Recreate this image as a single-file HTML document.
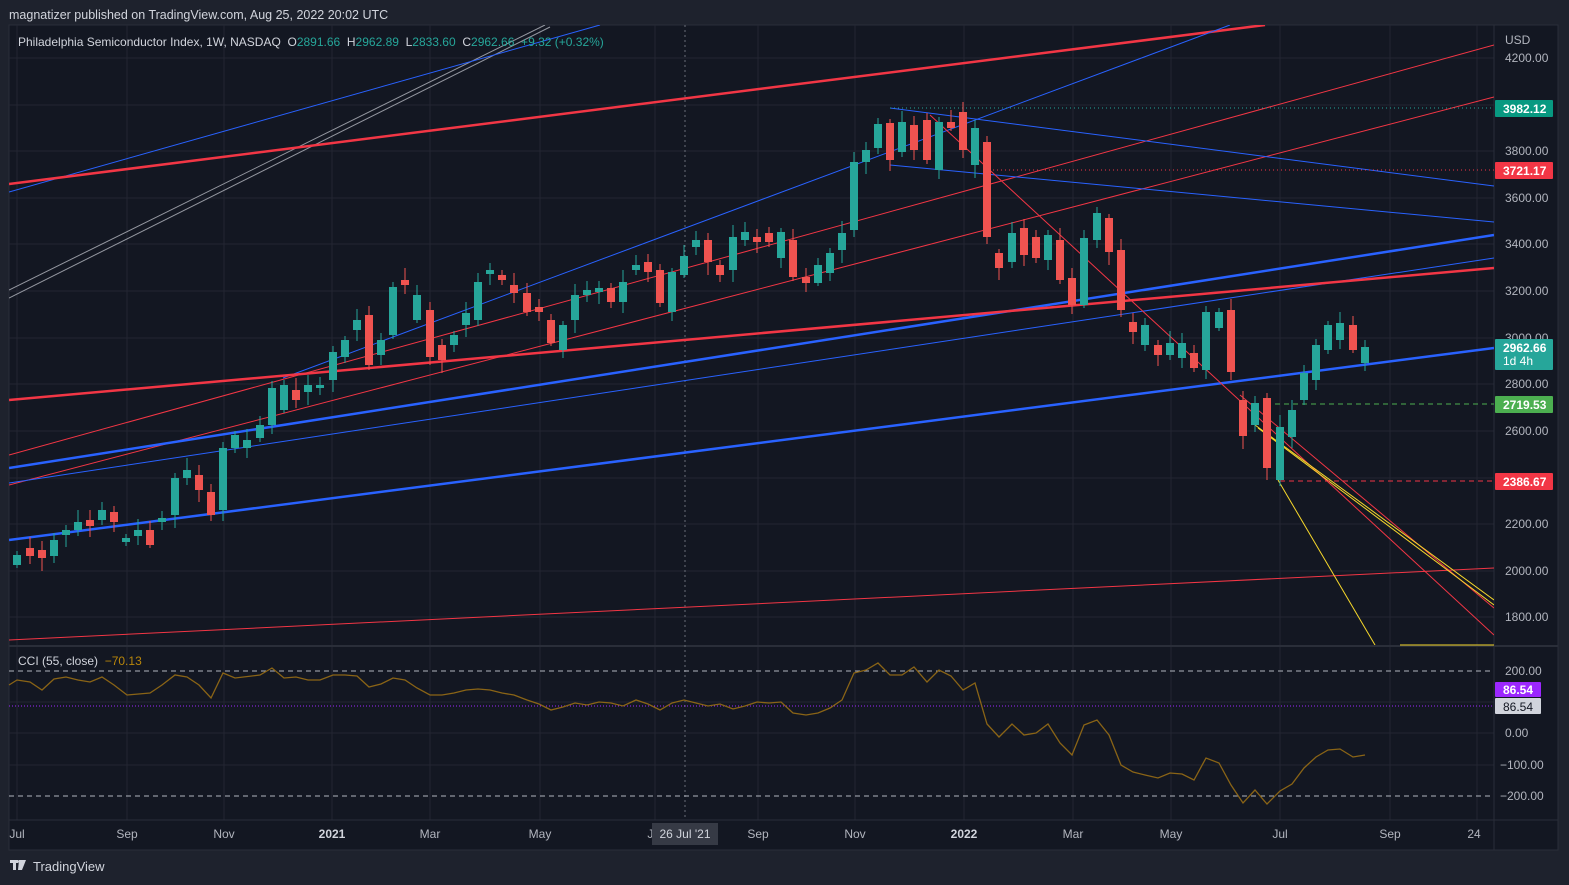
<!DOCTYPE html>
<html><head><meta charset="utf-8"><style>
body{margin:0;background:#1e222d;width:1569px;height:885px;overflow:hidden;font-family:"Liberation Sans",sans-serif;}
svg{position:absolute;left:0;top:0}
text{font-family:"Liberation Sans",sans-serif}
</style></head><body>
<svg width="1569" height="885" id="s">
<rect x="0" y="0" width="1569" height="885" fill="#1e222d"/>
<text x="9" y="19" fill="#d1d4dc" font-size="12.5">magnatizer published on TradingView.com, Aug 25, 2022 20:02 UTC</text>
<rect x="9" y="25" width="1549" height="825" fill="#131722" stroke="#2a2e39"/>
<g stroke="#232632" stroke-width="1">
<line x1="17" y1="25" x2="17" y2="820"/><line x1="127" y1="25" x2="127" y2="820"/><line x1="224" y1="25" x2="224" y2="820"/><line x1="332" y1="25" x2="332" y2="820"/><line x1="430" y1="25" x2="430" y2="820"/><line x1="540" y1="25" x2="540" y2="820"/><line x1="655" y1="25" x2="655" y2="820"/><line x1="758" y1="25" x2="758" y2="820"/><line x1="855" y1="25" x2="855" y2="820"/><line x1="964" y1="25" x2="964" y2="820"/><line x1="1073" y1="25" x2="1073" y2="820"/><line x1="1171" y1="25" x2="1171" y2="820"/><line x1="1280" y1="25" x2="1280" y2="820"/><line x1="1390" y1="25" x2="1390" y2="820"/><line x1="1477" y1="25" x2="1477" y2="820"/>
<line x1="9" y1="58" x2="1494" y2="58"/><line x1="9" y1="105" x2="1494" y2="105"/><line x1="9" y1="151" x2="1494" y2="151"/><line x1="9" y1="198" x2="1494" y2="198"/><line x1="9" y1="244" x2="1494" y2="244"/><line x1="9" y1="291" x2="1494" y2="291"/><line x1="9" y1="338" x2="1494" y2="338"/><line x1="9" y1="384" x2="1494" y2="384"/><line x1="9" y1="431" x2="1494" y2="431"/><line x1="9" y1="478" x2="1494" y2="478"/><line x1="9" y1="524" x2="1494" y2="524"/><line x1="9" y1="571" x2="1494" y2="571"/><line x1="9" y1="617" x2="1494" y2="617"/>
<line x1="9" y1="702" x2="1494" y2="702"/><line x1="9" y1="733" x2="1494" y2="733"/><line x1="9" y1="765" x2="1494" y2="765"/>
</g>
<line x1="9" y1="646" x2="1558" y2="646" stroke="#2a2e39" stroke-width="2"/>
<line x1="9" y1="820" x2="1558" y2="820" stroke="#2a2e39"/>
<line x1="1494" y1="25" x2="1494" y2="850" stroke="#2a2e39"/>
<line x1="685" y1="25" x2="685" y2="820" stroke="#6a6d78" stroke-dasharray="2,3"/>
<defs><clipPath id="c"><rect x="9" y="25" width="1485" height="620"/></clipPath></defs>
<g clip-path="url(#c)" fill="none">
<line x1="9" y1="290" x2="545" y2="25" stroke="#9598a1"/>
<line x1="9" y1="298" x2="550" y2="27" stroke="#9598a1"/>
<line x1="9" y1="192" x2="600" y2="25" stroke="#2962ff"/>
<line x1="9" y1="184" x2="1265" y2="25" stroke="#f23645" stroke-width="2.5"/>
<line x1="283" y1="378" x2="1230" y2="25" stroke="#2962ff"/>
<line x1="9" y1="455" x2="1494" y2="45" stroke="#f23645"/>
<line x1="9" y1="485" x2="1494" y2="97" stroke="#f23645"/>
<line x1="9" y1="483" x2="1494" y2="258" stroke="#2962ff"/>
<line x1="9" y1="468" x2="1494" y2="235" stroke="#2962ff" stroke-width="2.5"/>
<line x1="9" y1="540" x2="1494" y2="348" stroke="#2962ff" stroke-width="2.5"/>
<line x1="9" y1="400" x2="1494" y2="268" stroke="#f23645" stroke-width="2.5"/>
<line x1="9" y1="640" x2="1494" y2="568" stroke="#f23645"/>
<line x1="890" y1="108" x2="1494" y2="186" stroke="#2962ff"/>
<line x1="890" y1="165" x2="1494" y2="222" stroke="#2962ff"/>
<line x1="930" y1="115" x2="1494" y2="635" stroke="#f23645"/>
<line x1="1240" y1="395" x2="1494" y2="608" stroke="#f23645"/>
<line x1="1255" y1="425" x2="1494" y2="600" stroke="#f7d82b"/>
<line x1="1258" y1="428" x2="1494" y2="605" stroke="#f7d82b"/>
<line x1="1278" y1="480" x2="1375" y2="645" stroke="#f7d82b"/>
<line x1="890" y1="108" x2="1494" y2="108" stroke="#26a69a" stroke-dasharray="1,3"/>
<line x1="985" y1="170" x2="1494" y2="170" stroke="#f23645" stroke-dasharray="1,3"/>
<line x1="1275" y1="404" x2="1494" y2="404" stroke="#4caf50" stroke-dasharray="5,4"/>
<line x1="1280" y1="481" x2="1494" y2="481" stroke="#f23645" stroke-dasharray="5,4"/>
<g id="cd"></g>
</g>
<line x1="1400" y1="645" x2="1494" y2="645" stroke="#f7d82b"/>
<text x="18" y="46" fill="#d1d4dc" font-size="12" xml:space="preserve" style="white-space:pre">Philadelphia Semiconductor Index, 1W, NASDAQ  O<tspan fill="#26a69a">2891.66</tspan>  H<tspan fill="#26a69a">2962.89</tspan>  L<tspan fill="#26a69a">2833.60</tspan>  C<tspan fill="#26a69a">2962.66  +9.32 (+0.32%)</tspan></text>
<g fill="#b2b5be" font-size="12">
<text x="1505" y="44">USD</text>
<text x="1505" y="62">4200.00</text><text x="1505" y="155">3800.00</text><text x="1505" y="202">3600.00</text><text x="1505" y="248">3400.00</text><text x="1505" y="295">3200.00</text><text x="1505" y="342">3000.00</text><text x="1505" y="388">2800.00</text><text x="1505" y="435">2600.00</text><text x="1505" y="528">2200.00</text><text x="1505" y="575">2000.00</text><text x="1505" y="621">1800.00</text>
<text x="1505" y="675">200.00</text><text x="1505" y="737">0.00</text><text x="1500" y="769">−100.00</text><text x="1500" y="800">−200.00</text>
</g>
<g font-size="12" font-weight="bold" fill="#fff">
<rect x="1495" y="100" width="58" height="17" fill="#089981" rx="1"/><text x="1503" y="113">3982.12</text>
<rect x="1495" y="162" width="58" height="17" fill="#f23645" rx="1"/><text x="1503" y="175">3721.17</text>
<rect x="1495" y="339" width="58" height="31" fill="#26a69a" rx="1"/><text x="1503" y="352">2962.66</text><text x="1503" y="365" font-weight="normal">1d 4h</text>
<rect x="1495" y="396" width="58" height="17" fill="#4caf50" rx="1"/><text x="1503" y="409">2719.53</text>
<rect x="1495" y="473" width="58" height="17" fill="#f23645" rx="1"/><text x="1503" y="486">2386.67</text>
<rect x="1495" y="682" width="46" height="15" fill="#9c27ff" rx="1"/><text x="1503" y="694">86.54</text>
<rect x="1495" y="698" width="46" height="16" fill="#d1d4dc" rx="1"/><text x="1503" y="711" fill="#131722" font-weight="normal">86.54</text>
</g>
<line x1="9" y1="671" x2="1494" y2="671" stroke="#b2b5be" stroke-dasharray="5,4"/>
<line x1="9" y1="796" x2="1494" y2="796" stroke="#b2b5be" stroke-dasharray="5,4"/>
<line x1="9" y1="706" x2="1494" y2="706" stroke="#9c27ff" stroke-dasharray="1,2"/>
<polyline id="cci" fill="none" stroke="#8a6416" stroke-width="1.3" points="9,685 17,680 30,682 42,690 54,679 66,677 78,680 90,682 102,677 114,685 127,695 150,693 162,685 175,675 187,677 199,685 211,698 223,673 235,678 260,675 272,668 284,678 296,677 308,680 320,680 333,675 345,675 357,676 369,687 381,684 393,678 405,680 417,688 430,695 442,695 454,693 466,690 478,689 490,690 502,693 514,695 527,700 539,704 551,710 563,707 575,703 587,705 599,702 611,703 623,706 636,700 648,704 660,710 672,703 684,700 696,703 708,706 720,704 733,709 745,706 757,702 769,703 781,702 793,713 806,715 818,713 830,708 842,700 854,673 866,670 878,663 890,675 902,675 914,667 927,682 939,670 951,676 963,690 975,683 987,724 999,737 1012,724 1024,735 1036,733 1048,724 1060,743 1072,755 1084,725 1097,720 1109,735 1121,765 1133,772 1145,775 1158,778 1170,773 1182,774 1194,780 1206,758 1219,763 1231,785 1243,803 1255,790 1267,804 1280,791 1292,784 1304,768 1316,757 1328,750 1340,749 1353,757 1365,755"/>
<text x="18" y="665" fill="#d1d4dc" font-size="12" xml:space="preserve" style="white-space:pre">CCI (55, close)  <tspan fill="#b8860b">−70.13</tspan></text>
<g fill="#b2b5be" font-size="12" text-anchor="middle">
<text x="17" y="838">Jul</text><text x="127" y="838">Sep</text><text x="224" y="838">Nov</text><text x="332" y="838" font-weight="bold" fill="#d1d4dc">2021</text><text x="430" y="838">Mar</text><text x="540" y="838">May</text><text x="655" y="838">Jul</text><text x="758" y="838">Sep</text><text x="855" y="838">Nov</text><text x="964" y="838" font-weight="bold" fill="#d1d4dc">2022</text><text x="1073" y="838">Mar</text><text x="1171" y="838">May</text><text x="1280" y="838">Jul</text><text x="1390" y="838">Sep</text><text x="1474" y="838">24</text>
</g>
<rect x="652" y="823" width="66" height="22" fill="#363a45"/>
<text x="685" y="838" fill="#d1d4dc" font-size="12" text-anchor="middle">26 Jul '21</text>
<g fill="#d1d4dc"><rect x="10" y="860" width="8" height="3"/><rect x="13" y="860" width="3" height="10"/><path d="M19 860h7l-4 10h-4z"/><circle cx="19.5" cy="861.5" r="1.5"/></g>
<text x="33" y="871" fill="#d1d4dc" font-size="13">TradingView</text>
</svg>
<script>
var d=[[17,555,565,1],[30,548,556,0],[42,550,558,0],[54,540,556,1],[66,530,535,1],[78,522,530,1],[90,520,526,0],[102,510,520,1],[114,512,522,0],[126,538,542,1],[138,530,536,1],[150,530,545,0],[162,518,522,1],[175,478,515,1],[187,470,478,1],[199,475,490,0],[211,492,515,0],[223,448,510,1],[235,435,448,1],[247,440,448,1],[260,425,438,1],[272,388,425,1],[284,385,410,1],[296,390,400,0],[308,385,392,1],[320,385,388,1],[333,352,380,1],[345,340,357,1],[357,320,330,1],[369,315,365,0],[381,340,355,1],[393,287,335,1],[405,280,285,0],[417,295,320,1],[430,310,357,0],[442,345,360,0],[454,335,345,1],[466,313,325,1],[478,282,320,1],[490,270,274,1],[502,275,280,0],[514,285,293,0],[527,293,312,0],[539,307,312,0],[551,320,343,0],[563,325,350,1],[575,295,320,1],[587,290,295,1],[599,288,292,1],[611,288,302,0],[623,282,302,1],[636,265,270,1],[648,262,272,0],[660,270,303,0],[672,272,312,1],[684,256,275,1],[696,240,247,1],[708,240,262,0],[720,265,275,0],[733,237,270,1],[745,232,240,1],[757,237,242,0],[769,233,242,0],[781,232,258,1],[793,240,277,0],[806,277,283,0],[818,265,283,1],[830,253,273,1],[842,233,250,1],[854,162,230,1],[866,150,162,1],[878,124,148,1],[890,123,160,0],[902,122,152,1],[914,125,150,0],[927,120,160,0],[939,122,170,1],[951,122,128,0],[963,112,150,0],[975,128,165,1],[987,142,237,0],[999,253,268,0],[1012,233,262,1],[1024,228,255,0],[1036,237,258,0],[1048,235,260,1],[1060,240,280,0],[1072,278,305,0],[1084,238,305,1],[1097,213,240,1],[1109,218,252,0],[1121,250,310,0],[1133,322,332,0],[1145,325,345,1],[1158,345,355,0],[1170,343,355,1],[1182,343,358,1],[1194,353,368,0],[1206,312,370,1],[1219,312,328,1],[1231,310,372,0],[1243,400,436,0],[1255,403,425,1],[1267,398,468,0],[1280,427,480,1],[1292,410,437,1],[1304,373,400,1],[1316,345,380,1],[1328,325,350,1],[1340,323,340,1],[1353,325,350,0],[1365,347,363,1]];
var g=document.getElementById('cd'),h='';
d.forEach(function(c,i){var col=c[3]?'#26a69a':'#ef5350';var w1=4+(i*7%9),w2=3+(i*5%11);
h+='<line x1="'+c[0]+'" x2="'+c[0]+'" y1="'+(c[1]-w1)+'" y2="'+(c[2]+w2)+'" stroke="'+col+'"/>';
h+='<rect x="'+(c[0]-4)+'" y="'+c[1]+'" width="8" height="'+Math.max(1,c[2]-c[1])+'" fill="'+col+'"/>';});
g.innerHTML=h;
</script>
</body></html>
